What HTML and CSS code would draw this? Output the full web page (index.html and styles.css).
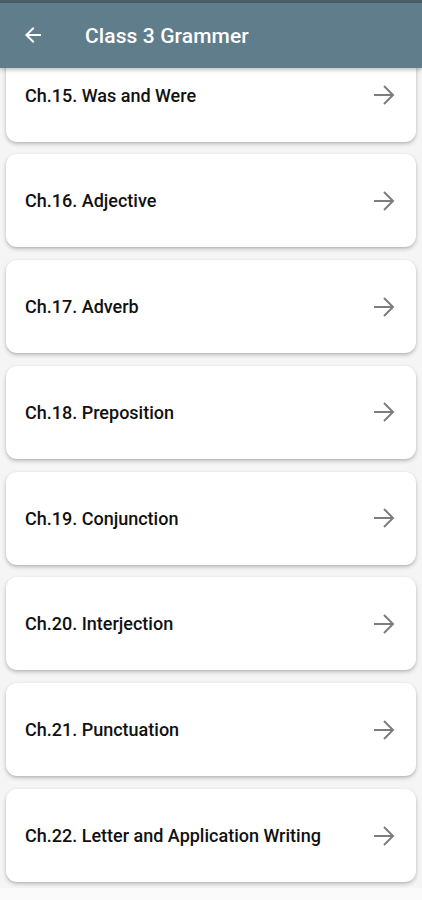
FILE: index.html
```html
<!DOCTYPE html>
<html lang="en">
<head>
    <meta charset="UTF-8">
    <meta name="viewport" content="width=device-width, initial-scale=1.0">
    <title>Class 3 Grammer</title>
    <link rel="stylesheet" href="styles.css">
</head>
<body>
    <div class="status-bar"></div>
    <header class="app-bar">
        <svg class="back" viewBox="0 0 24 24" width="24" height="24">
            <path d="M20 11H7.83l5.59-5.59L12 4l-8 8 8 8 1.41-1.41L7.83 13H20v-2z" fill="#fff"/>
        </svg>
        <h1>Class 3 Grammer</h1>
    </header>

    <main class="list">
        <div class="card"><span>Ch.15. Was and Were</span><svg class="go" viewBox="0 0 22 22"><path d="M1 11h19M11 2l9 9-9 9"/></svg></div>
        <div class="card"><span>Ch.16. Adjective</span><svg class="go" viewBox="0 0 22 22"><path d="M1 11h19M11 2l9 9-9 9"/></svg></div>
        <div class="card"><span>Ch.17. Adverb</span><svg class="go" viewBox="0 0 22 22"><path d="M1 11h19M11 2l9 9-9 9"/></svg></div>
        <div class="card"><span>Ch.18. Preposition</span><svg class="go" viewBox="0 0 22 22"><path d="M1 11h19M11 2l9 9-9 9"/></svg></div>
        <div class="card"><span>Ch.19. Conjunction</span><svg class="go" viewBox="0 0 22 22"><path d="M1 11h19M11 2l9 9-9 9"/></svg></div>
        <div class="card"><span>Ch.20. Interjection</span><svg class="go" viewBox="0 0 22 22"><path d="M1 11h19M11 2l9 9-9 9"/></svg></div>
        <div class="card"><span>Ch.21. Punctuation</span><svg class="go" viewBox="0 0 22 22"><path d="M1 11h19M11 2l9 9-9 9"/></svg></div>
        <div class="card"><span>Ch.22. Letter and Application Writing</span><svg class="go" viewBox="0 0 22 22"><path d="M1 11h19M11 2l9 9-9 9"/></svg></div>
    </main>
</body>
</html>
```

FILE: styles.css
```css
body {
    margin: 0;
    height: 900px;
    overflow: hidden;
    font-family: Roboto, "Noto Sans", sans-serif;
    background: #fafafa;
}

.status-bar {
    height: 3px;
    background: #4b5f69;
}

.app-bar {
    position: relative;
    z-index: 2;
    height: 65px;
    display: flex;
    align-items: center;
    background: #607d8b;
    box-shadow: 0 2px 4px rgba(0, 0, 0, 0.25);
}

.back {
    margin-left: 21px;
    margin-top: -1px;
    flex-shrink: 0;
}

.app-bar h1 {
    margin: 0 0 0 40px;
    font-size: 21px;
    font-weight: 500;
    color: #fff;
    letter-spacing: 0.1px;
}

.list {
    height: 839.5px;
    overflow: hidden;
    background: #f5f5f5;
    padding: 0 6px;
    display: flex;
    flex-direction: column;
    gap: 12.8px;
    margin-top: -19.5px;
}

.card {
    flex-shrink: 0;
    height: 93px;
    display: flex;
    align-items: center;
    justify-content: space-between;
    padding: 0 23px 0 19px;
    background: #fff;
    border-radius: 11px;
    box-shadow: 0 2px 4px rgba(0, 0, 0, 0.22), 0 1px 2px rgba(0, 0, 0, 0.08);
    font-size: 18px;
    font-weight: 500;
    color: #111;
}

.go {
    width: 22px;
    height: 22px;
    margin-right: -2px;
    fill: none;
    stroke: #7d7d7d;
    stroke-width: 2;
}
```
